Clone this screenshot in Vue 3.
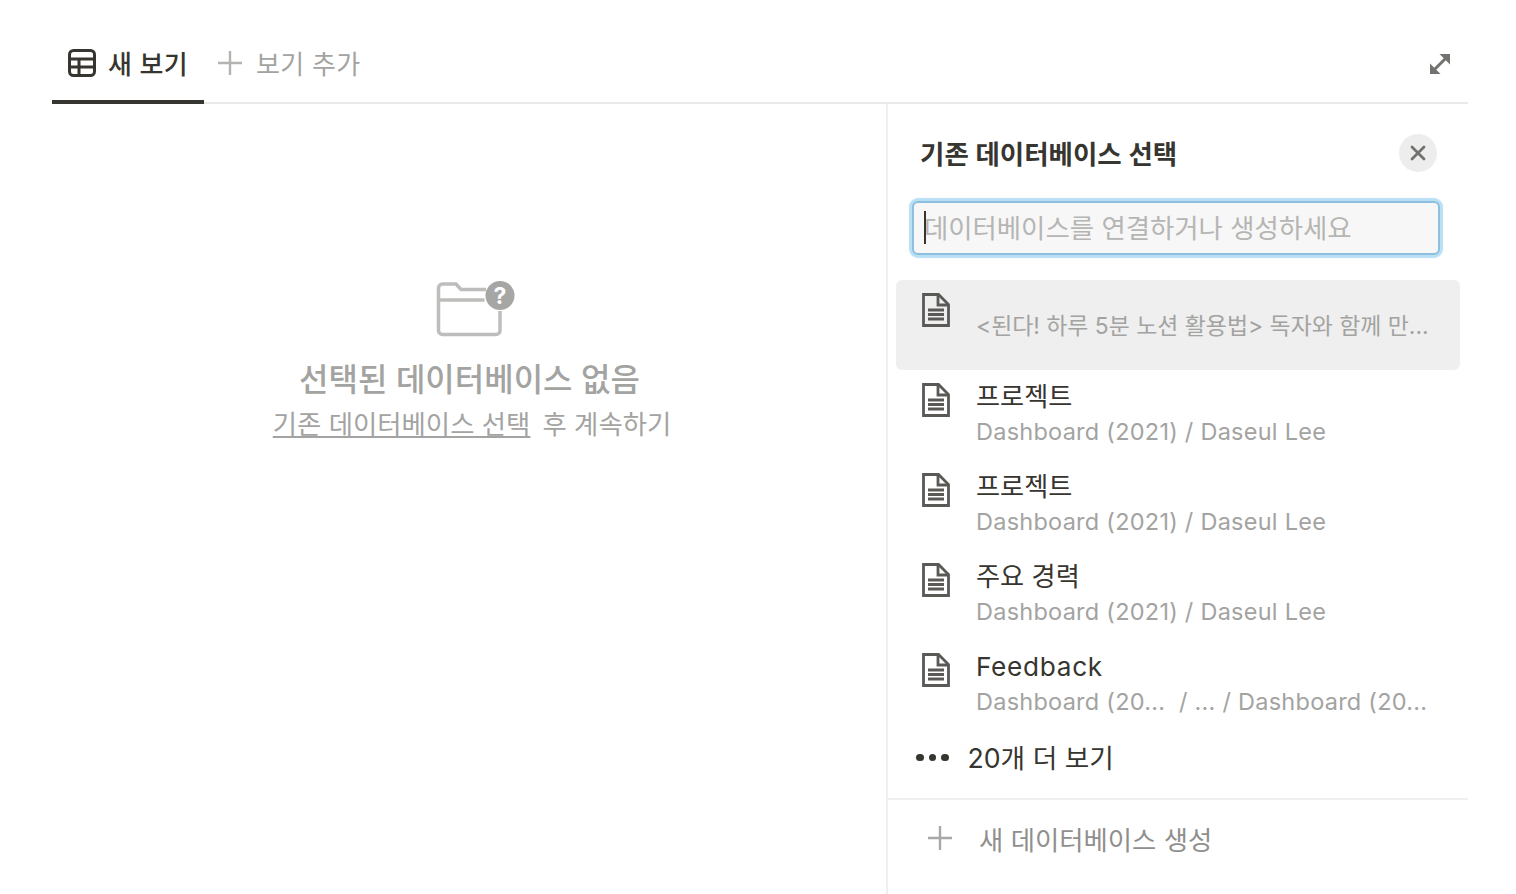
<template>
  <div class="page">
    <div class="tabs">
      <div class="tab active">
        <svg class="tab-icon" viewBox="0 0 28 28" fill="none" stroke="#37352f" stroke-width="3">
          <rect x="1.500" y="1.500" width="25" height="25" rx="4" />
          <path d="M1.500 10h25M1.500 18h25M11 10v16.500" />
        </svg>
        <span>새 보기</span>
      </div>
      <div class="tab add">
        <svg class="plus" viewBox="0 0 26 26" stroke="#b3b3b1" stroke-width="2.400"><path d="M13 1v24M1 13h24" /></svg>
        <span>보기 추가</span>
      </div>
      <svg class="expand" viewBox="0 0 22 22" fill="#73726e">
        <path d="M10.500 1H21v10.500z" />
        <path d="M1 10.500V21h10.500z" />
        <path d="M5 17L17 5" stroke="#73726e" stroke-width="3" />
      </svg>
    </div>

    <div class="body">
      <div class="empty">
        <svg class="folder" viewBox="0 0 80 58" fill="none">
          <path d="M50 8.500H25L20 3H6.500a4 4 0 0 0-4 4V49.500a4 4 0 0 0 4 4H60a4 4 0 0 0 4-4V30M2.500 19h46" stroke="#bdbdbb" stroke-width="3.500" />
          <circle cx="64" cy="14.500" r="14.500" fill="#a6a6a4" />
          <text x="64" y="22.500" text-anchor="middle" class="q">?</text>
        </svg>
        <div class="empty-title">선택된 데이터베이스 없음</div>
        <div class="empty-sub"><u>기존 데이터베이스 선택</u><span class="after">후 계속하기</span></div>
      </div>

      <aside class="panel">
        <div class="panel-head">
          <h2>기존 데이터베이스 선택</h2>
          <button class="close" type="button">
            <svg viewBox="0 0 16 16" stroke="#73726e" stroke-width="2.800" stroke-linecap="round"><path d="M2 2l12 12M14 2L2 14" /></svg>
          </button>
        </div>
        <div class="search">
          <i class="caret"></i>
          <span>데이터베이스를 연결하거나 생성하세요</span>
        </div>

        <ul class="list">
          <li v-for="(item, i) in items" :key="i" class="row" :class="{ selected: i === 0 }">
            <svg class="doc" viewBox="0 0 28 34" fill="none" stroke="#5a5955" stroke-width="2.800">
              <path d="M1.500 1.500h15l10 10v21h-25z" />
              <path d="M16 2v10h10" />
              <path d="M6 17h16M6 21.500h16M6 26h16" />
            </svg>
            <div class="row-text">
              <div class="row-title" :class="{ latin: item.latin }">{{ item.title }}</div>
              <div class="row-path">{{ item.path }}</div>
            </div>
          </li>
        </ul>

        <div class="more">
          <span class="dots"><i></i><i></i><i></i></span>
          <span>20개 더 보기</span>
        </div>

        <div class="create">
          <svg class="plus" viewBox="0 0 26 26" stroke="#a8a8a6" stroke-width="2.400"><path d="M13 1v24M1 13h24" /></svg>
          <span>새 데이터베이스 생성</span>
        </div>
      </aside>
    </div>
  </div>
</template>

<script setup>
const items = [
  { title: '', path: '<된다! 하루 5분 노션 활용법> 독자와 함께 만...' },
  { title: '프로젝트', path: 'Dashboard (2021) / Daseul Lee' },
  { title: '프로젝트', path: 'Dashboard (2021) / Daseul Lee' },
  { title: '주요 경력', path: 'Dashboard (2021) / Daseul Lee' },
  { title: 'Feedback', latin: true, path: 'Dashboard (20...  / ... / Dashboard (20...' }
]
</script>

<style>
html, body {
  background: #fff;
}
</style>

<style scoped>
.page {
  box-sizing: border-box;
  height: 894px;
  padding: 24px 48px 0 52px;
  overflow: hidden;
  font-family: Inter, "Noto Sans CJK KR", sans-serif;
  color: #37352f;
}

.tabs {
  display: flex;
  align-items: stretch;
  height: 78px;
  border-bottom: 2px solid #e9e9e9;
}

.tab {
  display: flex;
  align-items: center;
  padding-bottom: 1px;
  font-size: 26px;
  letter-spacing: 0.3px;
}

.tab.active {
  position: relative;
  width: 136px;
  padding-left: 16px;
  gap: 12px;
  font-weight: 500;
}

.tab.active::after {
  content: "";
  position: absolute;
  left: 0;
  right: 0;
  bottom: -2px;
  height: 4px;
  background: #37352f;
}

.tab-icon {
  width: 28px;
  height: 28px;
}

.tab.add {
  margin-left: 13px;
  gap: 13px;
  color: #a3a3a1;
}

.plus {
  width: 26px;
  height: 26px;
}

.expand {
  width: 22px;
  height: 22px;
  margin: 29px 17px 0 auto;
}

.body {
  display: flex;
  height: 790px;
}

.empty {
  width: 834px;
  display: flex;
  flex-direction: column;
  align-items: center;
  padding-top: 177px;
  padding-left: 1px;
  box-sizing: border-box;
  color: #a3a3a1;
}

.folder {
  width: 80px;
  height: 58px;
  margin-left: 12px;
}

.q {
  font: 700 23px Inter, sans-serif;
  fill: #fff;
}

.empty-title {
  margin-top: 19px;
  font-size: 32px;
  line-height: 44px;
  font-weight: 500;
}

.empty-sub {
  font-size: 26.400px;
  line-height: 38px;
  margin: 3px 0 0 5px;
}

.after {
  margin-left: 12px;
}

.panel {
  flex: 1;
  border-left: 2px solid #efefef;
  min-width: 0;
  display: flex;
  flex-direction: column;
}

.panel-head {
  display: flex;
  align-items: center;
  justify-content: space-between;
  height: 97px;
  padding: 0 31px 0 32px;
}

h2 {
  margin: 0;
  font-size: 26.500px;
  font-weight: 600;
  color: #37352f;
}

.close {
  width: 38px;
  height: 38px;
  padding: 11px;
  border: 0;
  border-radius: 50%;
  background: #ededed;
  display: flex;
}

.close svg {
  width: 16px;
  height: 16px;
}

.search {
  position: relative;
  box-sizing: border-box;
  height: 54px;
  margin: 0 28px 0 24px;
  padding: 0 0 4px 10px;
  display: flex;
  align-items: center;
  font-size: 26.400px;
  color: #b5b5b3;
  background: #f7f7f7;
  border: 2px solid #8ebfe0;
  border-radius: 6px;
  box-shadow: 0 0 1px 3px #b9dff5;
}

.caret {
  position: absolute;
  left: 10px;
  top: 8px;
  width: 2px;
  height: 33px;
  background: #37352f;
}

.list {
  list-style: none;
  margin: 25px 0 0;
  padding: 0 8px;
}

.row {
  display: flex;
  height: 90px;
  padding-left: 26px;
  box-sizing: border-box;
  border-radius: 6px;
}

.row.selected {
  background: #efefef;
}

.doc {
  flex: none;
  width: 28px;
  height: 34px;
  margin-top: 13px;
}

.row-text {
  margin-left: 26px;
  min-width: 0;
}

.row-title {
  font-size: 26.200px;
  height: 35px;
  line-height: 35px;
  margin-top: 9px;
  color: #37352f;
}

.row-title.latin {
  letter-spacing: 0.7px;
}

.row.selected .row-title {
  height: 19px;
}

.row-path {
  font-size: 23.500px;
  letter-spacing: 0.25px;
  line-height: 36px;
  color: #a3a3a1;
  white-space: pre;
}

.row.selected .row-path {
  font-size: 22.900px;
  letter-spacing: 0;
}

.more {
  display: flex;
  align-items: center;
  height: 53px;
  padding-left: 28px;
  gap: 19px;
  font-size: 26.700px;
}

.dots {
  display: flex;
  gap: 5px;
  margin-top: 2px;
}

.dots i {
  width: 7.500px;
  height: 7.500px;
  border-radius: 50%;
  background: #37352f;
}

.create {
  margin-top: 15px;
  border-top: 2px solid #efefef;
  display: flex;
  align-items: center;
  height: 76px;
  padding-left: 39px;
  gap: 26px;
  font-size: 26.400px;
  color: #8f8f8d;
}
</style>
